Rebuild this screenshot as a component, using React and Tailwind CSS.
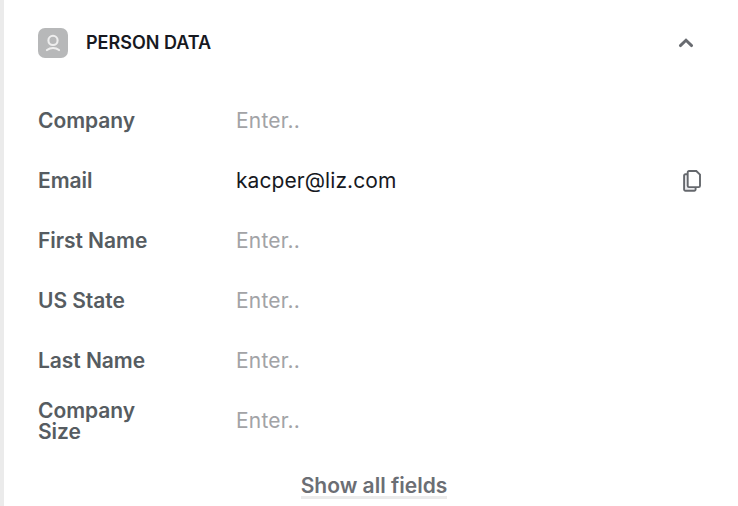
import React from 'react';

const fields = [
  { label: 'Company' },
  { label: 'Email', value: 'kacper@liz.com' },
  { label: 'First Name' },
  { label: 'US State' },
  { label: 'Last Name' },
  { label: 'Company Size' },
];

const PersonIcon = () => (
  <svg width="30" height="30" viewBox="0 0 30 30" fill="none" className="shrink-0">
    <rect width="30" height="30" rx="7" fill="#b7b8b9" />
    <circle cx="15" cy="12.4" r="4.6" stroke="#eeeeee" strokeWidth="2.1" />
    <path d="M9 22c3.4-2.7 8.6-2.7 12 0" stroke="#eeeeee" strokeWidth="2.2" strokeLinecap="round" />
  </svg>
);

const ChevronUpIcon = () => (
  <svg width="16" height="12" viewBox="0 0 16 12" fill="none">
    <path d="M2.4 8.6 8 3.2 13.6 8.6" stroke="#686b70" strokeWidth="2.9" strokeLinecap="round" />
  </svg>
);

const CopyIcon = () => (
  <svg width="20" height="24" viewBox="0 0 20 24" fill="none" stroke="#65686d" strokeWidth="1.9">
    <path d="M5 5.3H3.4A1.3 1.3 0 0 0 2.1 6.6V20.4A1.3 1.3 0 0 0 3.4 21.7H12.3A1.3 1.3 0 0 0 13.6 20.4V18.2" fill="#ececef" />
    <path d="M7 2h7.3L18 5.7v11.1a1.3 1.3 0 0 1-1.3 1.3H7a1.3 1.3 0 0 1-1.3-1.3V3.3A1.3 1.3 0 0 1 7 2Z" fill="#ffffff" />
  </svg>
);

const FieldRow = ({ label, value }) => (
  <div className="flex h-[60px] items-center">
    <div className="mr-[78px] w-[120px] shrink-0 pb-px text-[21px] leading-[21px] font-semibold tracking-[-0.05px] text-[#565c61]">
      {label}
    </div>
    <div
      className={`flex-1 text-[21px] leading-6 ${
        value ? 'tracking-[0.07px] text-[#17191f]' : 'tracking-[0.2px] text-[#a2a3a6]'
      }`}
    >
      {value || 'Enter..'}
    </div>
    {value && (
      <button type="button" aria-label={`Copy ${label}`}>
        <CopyIcon />
      </button>
    )}
  </div>
);

const App = () => {
  return (
    <div className="h-screen overflow-hidden border-l-4 border-[#ebebeb] bg-white pl-[34px] pr-9 font-['Inter',sans-serif] [font-optical-sizing:none]">
      <header className="flex h-[86px] items-center pr-2">
        <PersonIcon />
        <h2 className="ml-[18px] flex-1 pb-0.5 text-[18px] font-semibold text-[#17191f]">PERSON DATA</h2>
        <button type="button" aria-label="Collapse">
          <ChevronUpIcon />
        </button>
      </header>

      <div className="mt-[5px]">
        {fields.map((field) => (
          <FieldRow key={field.label} {...field} />
        ))}
      </div>

      <div className="mt-[25px] flex justify-center pl-2">
        <button
          type="button"
          className="border-b-[3px] border-[#ebebeb] text-[21px] leading-5 font-semibold text-[#6b6e74]"
        >
          Show all fields
        </button>
      </div>
    </div>
  );
};

export default App;
